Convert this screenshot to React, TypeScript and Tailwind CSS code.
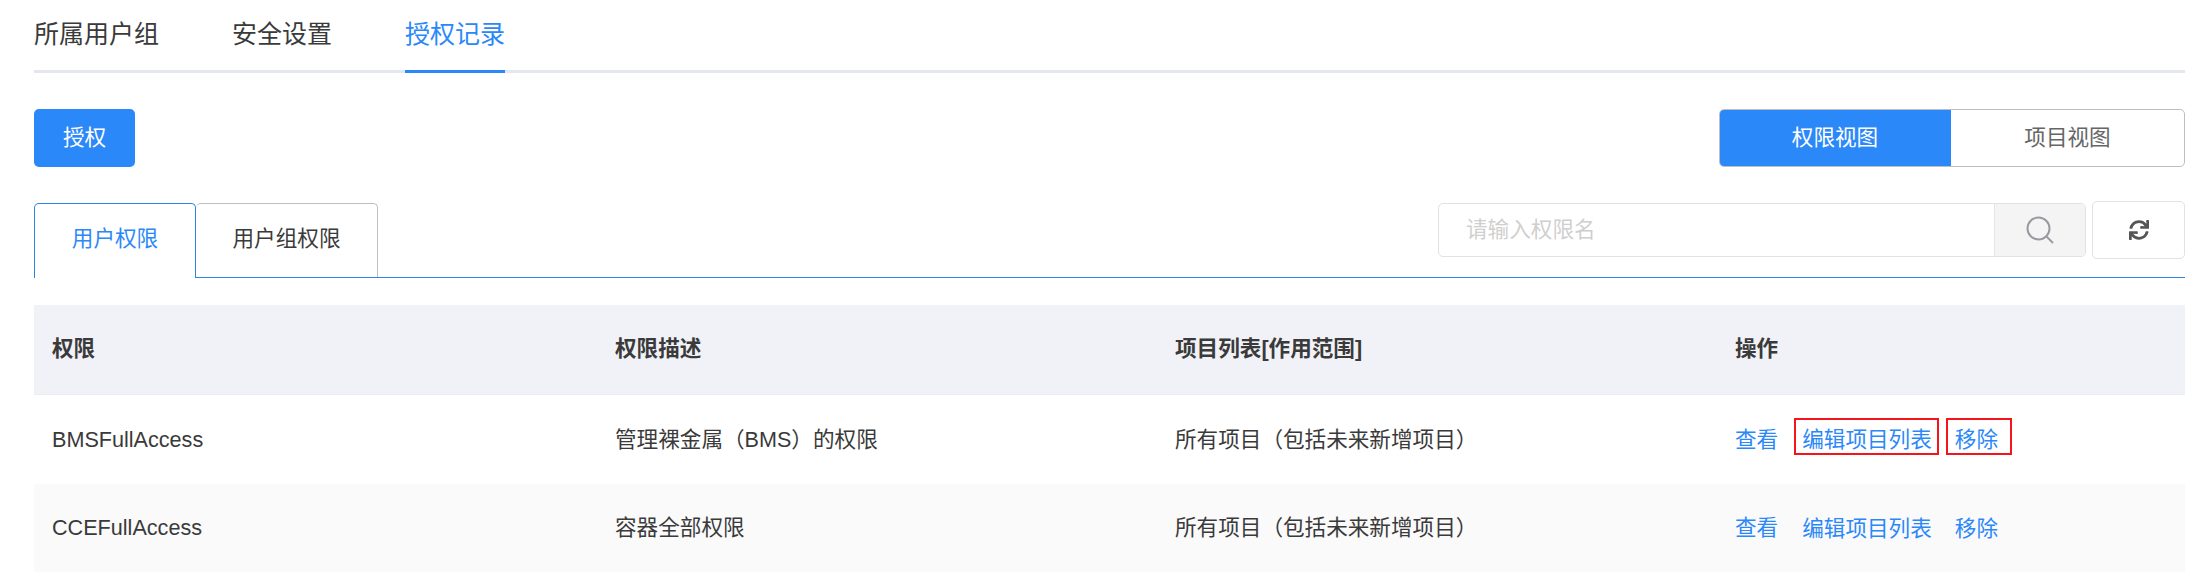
import React from "react";
import { FaSync } from "react-icons/fa";

const rows = [
  { name: "BMSFullAccess", desc: "管理裸金属（BMS）的权限", scope: "所有项目（包括未来新增项目）", marked: true },
  { name: "CCEFullAccess", desc: "容器全部权限", scope: "所有项目（包括未来新增项目）", marked: false },
];

const App = () => {
  return (
    <div className="h-[577px] w-[2206px] overflow-hidden bg-white px-[34px] pr-[21px] text-[21.6px] text-[#3a3a3a] [font-family:'Liberation_Sans','Noto_Sans_CJK_SC',sans-serif]">
      {/* top tabs */}
      <div className="flex h-[73px] gap-[73px] border-b-[3px] border-[#e4e7ee] text-[25px]">
        <div className="flex h-[73px] items-center pb-[3px]">所属用户组</div>
        <div className="flex h-[73px] items-center pb-[3px]">安全设置</div>
        <div className="flex h-[73px] items-center border-b-[3px] border-[#2a88f8] text-[#2a88f8]">授权记录</div>
      </div>

      {/* actions */}
      <div className="mt-[36px] flex h-[58px] items-center justify-between">
        <button className="h-[58px] w-[101px] rounded-[5px] bg-[#2a88f8] text-[21.6px] text-white">授权</button>
        <div className="flex h-[58px] w-[466px] overflow-hidden rounded-[5px] border border-[#bdbdc4]">
          <div className="-my-px -ml-px flex w-[232px] items-center justify-center bg-[#2a88f8] text-white">权限视图</div>
          <div className="flex flex-1 items-center justify-center text-[#666]">项目视图</div>
        </div>
      </div>

      {/* sub tabs + search */}
      <div className="mt-[36px] flex h-[75px] items-start justify-between border-b border-[#2f83e4]">
        <div className="flex">
          <div className="flex h-[75px] w-[162px] items-center justify-center rounded-t-[5px] border border-b-0 border-[#2f83e4] bg-white pb-[3px] text-[#2a88f8]">用户权限</div>
          <div className="flex h-[74px] w-[182px] items-center justify-center rounded-t-[5px] border border-l-0 border-b-0 border-[#bdbdc4] pb-[2px] text-[#3a3a3a]">用户组权限</div>
        </div>
        <div className="-mt-[2px] flex items-center">
          <div className="flex h-[54px] w-[648px] overflow-hidden rounded-[5px] border border-[#e1e1e6]">
            <div className="flex flex-1 items-center pl-[27px] text-[#cfcfcf]">请输入权限名</div>
            <div className="flex w-[91px] items-center justify-center border-l border-[#e6e6e6] bg-[#f4f4f4]">
              <svg width="30" height="30" viewBox="0 0 30 30" fill="none" stroke="#9a9aa0" strokeWidth="2">
                <circle cx="13.5" cy="13.5" r="11" />
                <path d="M21.5 21.5 L28 28" />
              </svg>
            </div>
          </div>
          <button className="ml-[6px] flex h-[58px] w-[93px] items-center justify-center rounded-[5px] border border-[#e1e1e6] bg-white">
            <FaSync className="h-[20px] w-[20px] text-[#555]" />
          </button>
        </div>
      </div>

      {/* table */}
      <div className="mt-[27px]">
        <div className="grid h-[90px] grid-cols-[563px_560px_560px_468px] items-center border-b border-[#eceef4] bg-[#f1f2f7] font-bold">
          <div className="pl-[18px]">权限</div>
          <div className="pl-[18px]">权限描述</div>
          <div className="pl-[18px]">项目列表[作用范围]</div>
          <div className="pl-[18px]">操作</div>
        </div>
        {rows.map((row) => (
          <div
            key={row.name}
            className={`grid h-[88.5px] grid-cols-[563px_560px_560px_468px] items-center pt-[1px] ${row.marked ? "bg-white" : "bg-[#fafafb]"}`}
          >
            <div className="pl-[18px]">{row.name}</div>
            <div className="pl-[18px]">{row.desc}</div>
            <div className="pl-[18px]">{row.scope}</div>
            <div className="flex items-center pl-[18px] text-[#2a88f8]">
              <span>查看</span>
              <span className={`mb-[6px] ml-[16px] h-[37px] border-2 pl-[6px] pr-[5px] leading-[39px] ${row.marked ? "border-[#f5141c]" : "border-transparent"}`}>编辑项目列表</span>
              <span className={`mb-[6px] ml-[7px] h-[37px] w-[66px] border-2 pl-[7px] leading-[39px] ${row.marked ? "border-[#f5141c]" : "border-transparent"}`}>移除</span>
            </div>
          </div>
        ))}
      </div>
    </div>
  );
};

export default App;
